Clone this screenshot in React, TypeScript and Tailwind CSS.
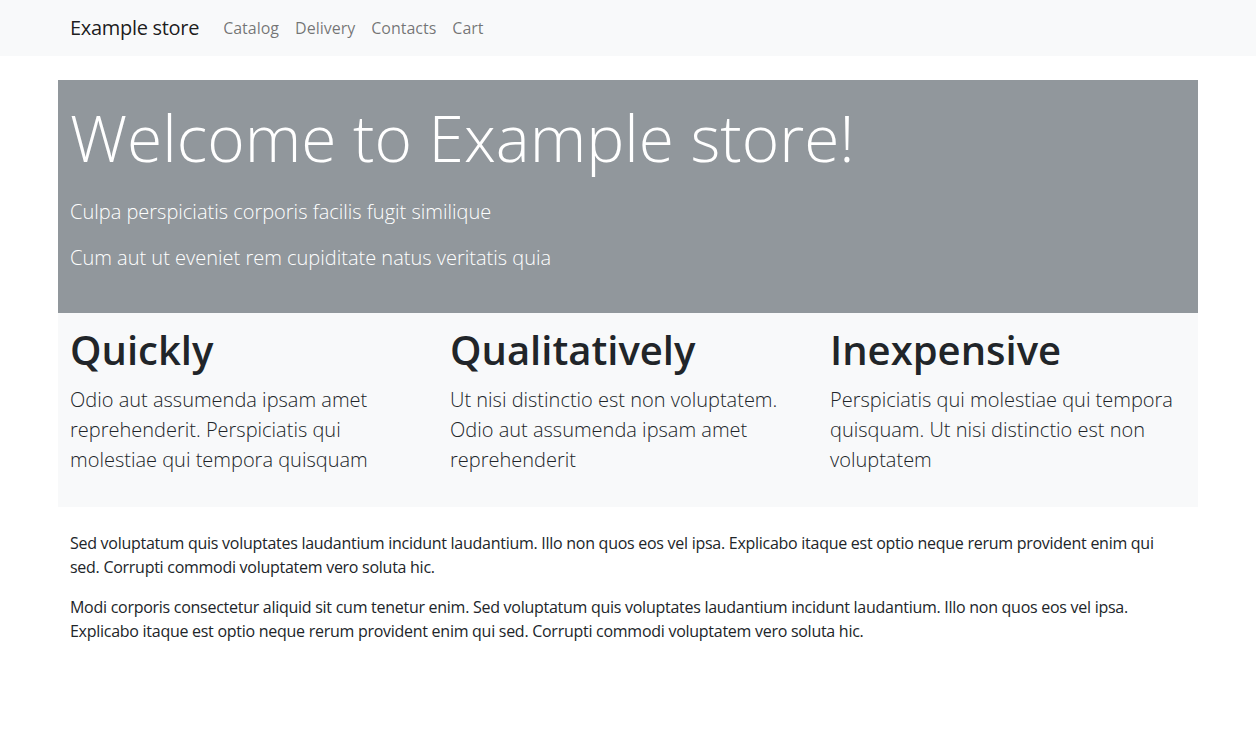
import React from 'react'

const links = ['Catalog', 'Delivery', 'Contacts', 'Cart']

const features = [
  {
    title: 'Quickly',
    text: 'Odio aut assumenda ipsam amet reprehenderit. Perspiciatis qui molestiae qui tempora quisquam',
  },
  {
    title: 'Qualitatively',
    text: 'Ut nisi distinctio est non voluptatem. Odio aut assumenda ipsam amet reprehenderit',
  },
  {
    title: 'Inexpensive',
    text: 'Perspiciatis qui molestiae qui tempora quisquam. Ut nisi distinctio est non voluptatem',
  },
]

const App = () => {
  return (
    <div className="min-h-screen bg-white text-[#212529] font-['Open_Sans',sans-serif]">
      <nav className="h-14 bg-[#f8f9fa]">
        <div className="w-[1140px] mx-auto px-3 h-full flex items-center">
          <a href="#" className="text-xl tracking-[-0.3px] text-black/90 mr-4">
            Example store
          </a>
          <ul className="flex">
            {links.map((l) => (
              <li key={l}>
                <a href="#" className="px-2 text-base text-black/55">
                  {l}
                </a>
              </li>
            ))}
          </ul>
        </div>
      </nav>

      <main className="w-[1140px] mx-auto mt-6">
        <section className="bg-[#91979c] text-white px-3 pt-5 pb-10">
          <h1 className="text-[64px] leading-[1.2] font-light mb-5">Welcome to Example store!</h1>
          <p className="text-xl font-light leading-normal mb-4">
            Culpa perspiciatis corporis facilis fugit similique
          </p>
          <p className="text-xl font-light leading-normal">
            Cum aut ut eveniet rem cupiditate natus veritatis quia
          </p>
        </section>

        <section className="bg-[#f8f9fa] grid grid-cols-3 pt-[13px] pb-8">
          {features.map((f) => (
            <div key={f.title} className="px-3">
              <h2 className="text-[40px] leading-[1.2] font-semibold mb-[11px]">{f.title}</h2>
              <p className="text-xl font-light leading-normal">{f.text}</p>
            </div>
          ))}
        </section>

        <section className="px-3 mt-6 text-base leading-normal tracking-[-0.27px]">
          <p className="mb-4">
            Sed voluptatum quis voluptates laudantium incidunt laudantium. Illo non quos eos vel ipsa.
            Explicabo itaque est optio neque rerum provident enim qui sed. Corrupti commodi voluptatem
            vero soluta hic.
          </p>
          <p>
            Modi corporis consectetur aliquid sit cum tenetur enim. Sed voluptatum quis voluptates
            laudantium incidunt laudantium. Illo non quos eos vel ipsa. Explicabo itaque est optio neque
            rerum provident enim qui sed. Corrupti commodi voluptatem vero soluta hic.
          </p>
        </section>
      </main>
    </div>
  )
}

export default App
